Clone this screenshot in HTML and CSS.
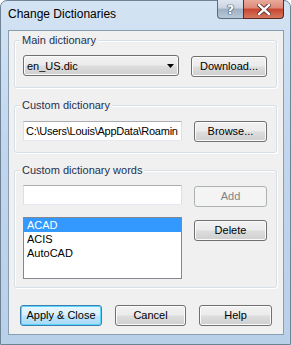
FILE: index.html
```html
<!DOCTYPE html>
<html>
<head>
<meta charset="utf-8">
<link rel="stylesheet" href="styles.css">
</head>
<body>
<div class="window">
  <div class="titlebar">
    <span class="title">Change Dictionaries</span>
    <div class="caption-btns">
      <span class="cbtn help">?</span>
      <span class="cbtn close"><svg width="14" height="11" viewBox="0 0 14 11"><path d="M2 1 L12 10 M12 1 L2 10" stroke="#4a2a2a" stroke-width="4" stroke-linecap="square" fill="none"/><path d="M2 1 L12 10 M12 1 L2 10" stroke="#ffffff" stroke-width="2.4" stroke-linecap="square" fill="none"/></svg></span>
    </div>
  </div>
  <div class="client">
    <div class="group g1">
      <span class="legend">Main dictionary</span>
      <div class="row">
        <div class="combo"><span>en_US.dic</span><svg class="arrow" width="7" height="4" viewBox="0 0 7 4"><path d="M0 0 H7 L3.5 4 Z" fill="#000"/></svg></div>
        <button class="btn btn-download">Download...</button>
      </div>
    </div>
    <div class="group g2">
      <span class="legend">Custom dictionary</span>
      <div class="row">
        <div class="field path">C:\Users\Louis\AppData\Roamin</div>
        <button class="btn btn-side">Browse...</button>
      </div>
    </div>
    <div class="group g3">
      <span class="legend">Custom dictionary words</span>
      <div class="row">
        <div class="field"></div>
        <button class="btn btn-side disabled">Add</button>
      </div>
      <div class="row row-list">
        <div class="listbox">
          <div class="item selected">ACAD</div>
          <div class="item">ACIS</div>
          <div class="item">AutoCAD</div>
        </div>
        <button class="btn btn-side btn-delete">Delete</button>
      </div>
    </div>
    <div class="footer">
      <button class="btn btn-default">Apply &amp; Close</button>
      <button class="btn btn-cancel">Cancel</button>
      <button class="btn btn-help">Help</button>
    </div>
  </div>
</div>
</body>
</html>
```

FILE: styles.css
```css
html, body {
  margin: 0;
  padding: 0;
  background: #ffffff;
}
.window {
  box-sizing: border-box;
  width: 291px;
  height: 345px;
  border: 1px solid #6f8397;
  border-radius: 7px 7px 0 0;
  background: linear-gradient(180deg, #d3e3f3 0%, #c2d7ee 40%, #b9d0e9 100%);
  display: flex;
  flex-direction: column;
  font-family: "Liberation Sans", Arial, sans-serif;
  font-size: 11px;
}
.titlebar {
  height: 29px;
  flex: none;
  display: flex;
  justify-content: space-between;
  align-items: flex-start;
  padding-left: 7px;
  padding-right: 6px;
}
.title {
  font-size: 12px;
  color: #000;
  margin-top: 6px;
  line-height: 15px;
}
.caption-btns {
  display: flex;
  margin-top: -1px;
}
.cbtn {
  box-sizing: border-box;
  height: 19px;
  display: flex;
  align-items: center;
  justify-content: center;
  border: 1px solid #5b6b7e;
  border-top: none;
}
.help {
  width: 26px;
  border-radius: 0 0 0 4px;
  border-right: none;
  background: linear-gradient(180deg, #dde6ef 0%, #c9d5e2 45%, #9fb0c4 50%, #b7c7d8 100%);
  color: #fff;
  font-family: "DejaVu Sans", sans-serif;
  font-weight: bold;
  font-size: 13px;
  text-shadow: 0 0 1px #2b3b4d, 0 0 1px #2b3b4d, 0 0 1px #2b3b4d;
}
.close {
  width: 41px;
  border-radius: 0 0 4px 0;
  border-color: #5a2a24;
  background: linear-gradient(180deg, #e9a99a 0%, #dc8a78 45%, #c8452f 50%, #d6775f 100%);
}
.client {
  box-sizing: border-box;
  flex: none;
  height: 305px;
  margin: 0 6px 0 7px;
  border: 1px solid #8a9db1;
  background: #f0f0f0;
  padding: 9px 6px 0 5px;
  display: flex;
  flex-direction: column;
}
.group {
  border: 1px solid #d5dfe5;
  border-radius: 3px;
  box-shadow: inset 1px 1px 0 #ffffff, 1px 1px 0 #ffffff;
  padding: 0 9px 10px 8px;
  display: flex;
  flex-direction: column;
}
.g2, .g3 {
  margin-top: 17px;
}
.g3 {
  padding-bottom: 8px;
}
.legend {
  align-self: flex-start;
  margin: -7px 0 0 -3px;
  padding: 0 2px;
  background: #f0f0f0;
  line-height: 13px;
  color: #1e3050;
}
.row {
  display: flex;
  align-items: flex-start;
  gap: 12px;
}
.g1 .row { margin-top: 8px; }
.g2 .row { margin-top: 9px; }
.g3 .row { margin-top: 8px; }
.g3 .row-list { margin-top: 10px; }
.btn {
  box-sizing: border-box;
  height: 21px;
  padding: 0;
  border: 1px solid #707070;
  border-radius: 3px;
  background: linear-gradient(180deg, #f2f2f2 0%, #ebebeb 48%, #dddddd 52%, #cfcfcf 100%);
  box-shadow: inset 0 0 0 1px #fbfbfb;
  font-family: "Liberation Sans", Arial, sans-serif;
  font-size: 11px;
  color: #000;
  line-height: 19px;
  text-align: center;
}
.combo {
  box-sizing: border-box;
  width: 156px;
  height: 21px;
  border: 1px solid #707070;
  border-radius: 3px;
  background: linear-gradient(180deg, #f2f2f2 0%, #ebebeb 48%, #dddddd 52%, #cfcfcf 100%);
  box-shadow: inset 0 0 0 1px #fbfbfb;
  display: flex;
  align-items: center;
  justify-content: space-between;
  padding: 0 4px 0 3px;
  color: #000;
}
.arrow { flex: none; }
.btn-download {
  width: 76px;
  margin-top: 1px;
}
.btn-side {
  width: 73px;
}
.field {
  box-sizing: border-box;
  width: 159px;
  height: 20px;
  border: 1px solid #dbdfe6;
  border-top-color: #abadb3;
  border-bottom-color: #e3e9ef;
  background: #ffffff;
  padding: 0 1px 0 2px;
  line-height: 18px;
  white-space: nowrap;
  overflow: hidden;
  color: #000;
}
.path {
  letter-spacing: -0.25px;
}
.disabled {
  border-color: #adb2b5;
  background: #f4f4f4;
  box-shadow: none;
  color: #838383;
}
.g3 .disabled { margin-top: 1px; }
.listbox {
  box-sizing: border-box;
  width: 159px;
  height: 62px;
  border: 1px solid #828790;
  background: #ffffff;
}
.item {
  height: 14px;
  line-height: 14px;
  padding-left: 3px;
  color: #000;
}
.item.selected {
  background: #3399ff;
  color: #ffffff;
}
.btn-delete {
  margin-top: 3px;
}
.footer {
  display: flex;
  gap: 13px;
  margin-top: 17px;
  padding-left: 6px;
}
.btn-default {
  width: 82px;
  border-color: #3c7fb1;
  box-shadow: inset 0 0 0 1px #59d6fa;
  background: linear-gradient(180deg, #eaf6fd 0%, #d9f0fc 48%, #bee6fd 52%, #a7d9f5 100%);
}
.btn-cancel {
  width: 71px;
}
.btn-help {
  width: 73px;
}
```
